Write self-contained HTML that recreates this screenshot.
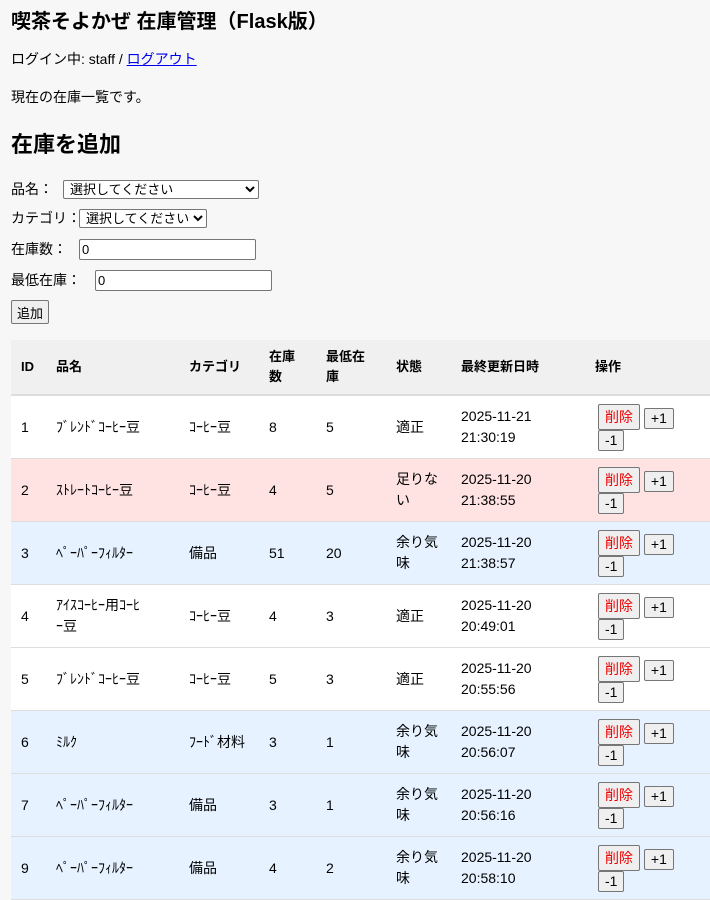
<!DOCTYPE html>
<html><head><meta charset="utf-8"><style>
body{margin:0;background:#f7f7f7;font-family:"Liberation Sans","Noto Sans CJK JP",sans-serif;font-size:14px;color:#000;width:710px;height:896px;overflow:hidden}
h1{font-size:20px;margin:0;position:absolute;top:5px;left:11px}
.p{position:absolute;left:11px}
a{color:#00e}
h2{font-size:22px;margin:0}
select,input{font-family:inherit;font-size:13px;border:1px solid #767676;border-radius:2px;background:#fff;height:19px;box-sizing:border-box;padding:0 2px;vertical-align:middle;position:absolute;top:0}
button{font-family:inherit;font-size:14px;background:#efefef;border:1px solid #767676;border-radius:2px;padding:0 6px;margin:0;height:21px}
table{position:absolute;top:340px;left:11px;width:700px;border-collapse:collapse;table-layout:fixed}
th{background:#f0f0f0;text-align:left;font-weight:bold;height:54px;padding:0 10px;line-height:20px;font-size:13px;border-bottom:2px solid #ddd}
td{padding:0 10px;height:62px;border-bottom:1px solid #ddd;line-height:21px;font-size:14px}
tr.o td{background:#fff}tr.l td{background:#ffe3e3}tr.h td{background:#e6f2ff}
.d{color:#e00;height:26px}
.ops{line-height:20px;padding-left:13px}
.ops button{vertical-align:top}
</style></head><body>
<h1>喫茶そよかぜ 在庫管理（Flask版）</h1>
<div class="p" style="top:49px">ログイン中: staff / <a href="#">ログアウト</a></div>
<div class="p" style="top:87px">現在の在庫一覧です。</div>
<h2 class="p" style="top:127px">在庫を追加</h2>
<div class="p" style="top:179px;width:600px">品名：<select style="left:52px;top:1px;width:196px"><option>選択してください</option></select></div>
<div class="p" style="top:208px;width:600px">カテゴリ：<select style="left:68px;top:1px;width:128px"><option>選択してください</option></select></div>
<div class="p" style="top:239px;width:600px">在庫数：<input value="0" style="left:68px;top:0;width:177px;height:21px"></div>
<div class="p" style="top:270px;width:600px">最低在庫：<input value="0" style="left:84px;top:0;width:177px;height:21px"></div>
<div class="p" style="top:300px"><button style="height:24px;font-size:13px;padding:0 5px">追加</button></div>
<table>
<colgroup><col style="width:35px"><col style="width:133px"><col style="width:80px"><col style="width:57px"><col style="width:70px"><col style="width:65px"><col style="width:134px"><col style="width:126px"></colgroup>
<tr><th>ID</th><th>品名</th><th>カテゴリ</th><th>在庫数</th><th>最低在庫</th><th>状態</th><th>最終更新日時</th><th>操作</th></tr>
<tr class="o"><td>1</td><td>ﾌﾞﾚﾝﾄﾞｺｰﾋｰ豆</td><td>ｺｰﾋｰ豆</td><td>8</td><td>5</td><td>適正</td><td>2025-11-21<br>21:30:19</td><td class="ops"><button class="d">削除</button> <button style="margin-top:4px">+1</button><br><button>-1</button></td></tr>
<tr class="l"><td>2</td><td>ｽﾄﾚｰﾄｺｰﾋｰ豆</td><td>ｺｰﾋｰ豆</td><td>4</td><td>5</td><td>足りない</td><td>2025-11-20<br>21:38:55</td><td class="ops"><button class="d">削除</button> <button style="margin-top:4px">+1</button><br><button>-1</button></td></tr>
<tr class="h"><td>3</td><td>ﾍﾟｰﾊﾟｰﾌｨﾙﾀｰ</td><td>備品</td><td>51</td><td>20</td><td>余り気味</td><td>2025-11-20<br>21:38:57</td><td class="ops"><button class="d">削除</button> <button style="margin-top:4px">+1</button><br><button>-1</button></td></tr>
<tr class="o"><td>4</td><td>ｱｲｽｺｰﾋｰ用ｺｰﾋ<br>ｰ豆</td><td>ｺｰﾋｰ豆</td><td>4</td><td>3</td><td>適正</td><td>2025-11-20<br>20:49:01</td><td class="ops"><button class="d">削除</button> <button style="margin-top:4px">+1</button><br><button>-1</button></td></tr>
<tr class="o"><td>5</td><td>ﾌﾞﾚﾝﾄﾞｺｰﾋｰ豆</td><td>ｺｰﾋｰ豆</td><td>5</td><td>3</td><td>適正</td><td>2025-11-20<br>20:55:56</td><td class="ops"><button class="d">削除</button> <button style="margin-top:4px">+1</button><br><button>-1</button></td></tr>
<tr class="h"><td>6</td><td>ﾐﾙｸ</td><td>ﾌｰﾄﾞ材料</td><td>3</td><td>1</td><td>余り気味</td><td>2025-11-20<br>20:56:07</td><td class="ops"><button class="d">削除</button> <button style="margin-top:4px">+1</button><br><button>-1</button></td></tr>
<tr class="h"><td>7</td><td>ﾍﾟｰﾊﾟｰﾌｨﾙﾀｰ</td><td>備品</td><td>3</td><td>1</td><td>余り気味</td><td>2025-11-20<br>20:56:16</td><td class="ops"><button class="d">削除</button> <button style="margin-top:4px">+1</button><br><button>-1</button></td></tr>
<tr class="h"><td>9</td><td>ﾍﾟｰﾊﾟｰﾌｨﾙﾀｰ</td><td>備品</td><td>4</td><td>2</td><td>余り気味</td><td>2025-11-20<br>20:58:10</td><td class="ops"><button class="d">削除</button> <button style="margin-top:4px">+1</button><br><button>-1</button></td></tr>
</table>
</body></html>
